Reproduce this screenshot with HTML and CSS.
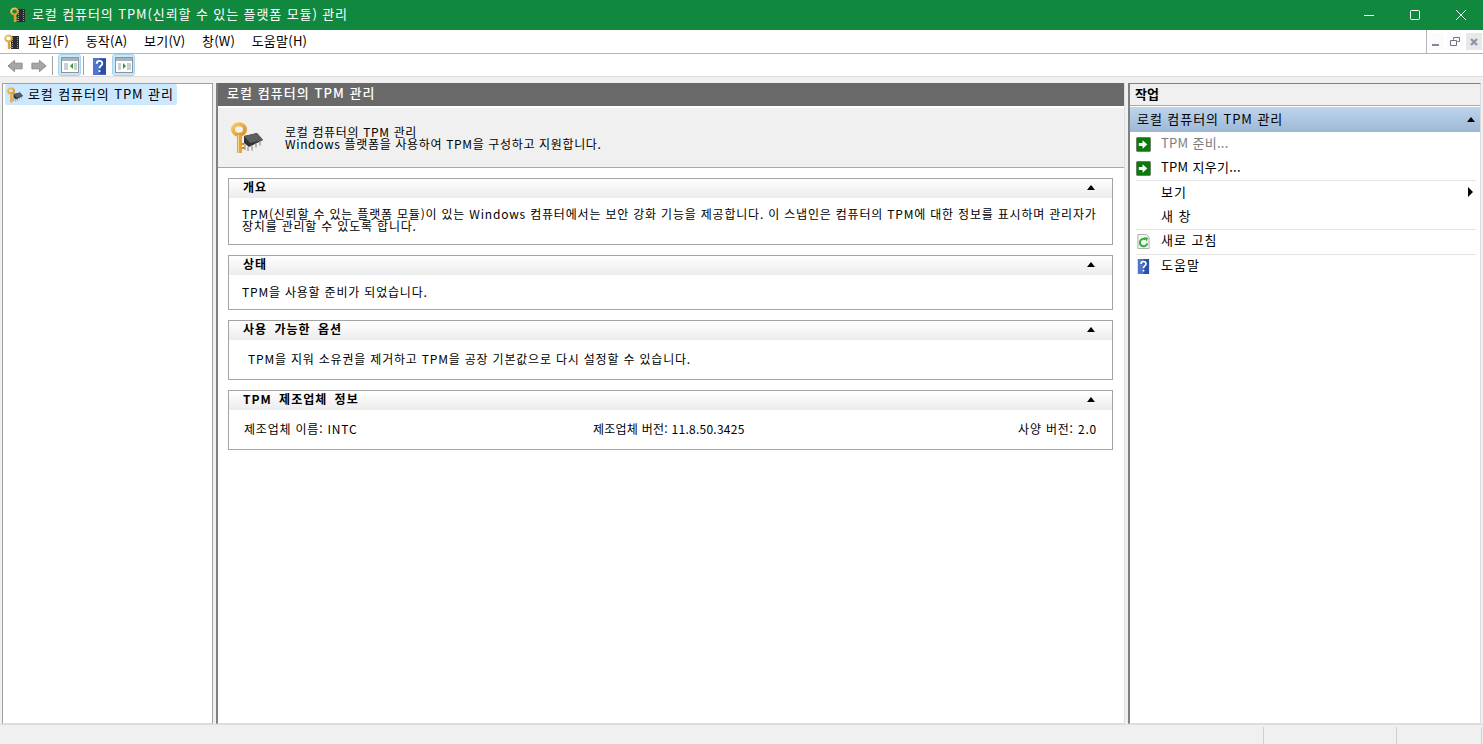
FILE: index.html
```html
<!DOCTYPE html>
<html lang="ko">
<head>
    <meta charset="UTF-8">
    <title>로컬 컴퓨터의 TPM(신뢰할 수 있는 플랫폼 모듈) 관리</title>
    <link rel="stylesheet" href="styles.css">
</head>
<body>
    <svg class="defs" width="0" height="0">
        <defs>
            <linearGradient id="gold" x1="0" y1="0" x2="1" y2="1">
                <stop offset="0" stop-color="#f6c868"/>
                <stop offset="1" stop-color="#d98f24"/>
            </linearGradient>
        </defs>
        <symbol id="key-book" viewBox="0 0 16 16">
            <rect x="7" y="2" width="8" height="13" fill="#2b2b2b"/>
            <path d="M8.500 3v11M13.500 3v11" stroke="#9a9a9a" stroke-dasharray="1 1"/>
            <ellipse cx="4.500" cy="4.500" rx="3.300" ry="3" fill="none" stroke="url(#gold)" stroke-width="2"/>
            <path d="M5 7v8" stroke="#e0a032" stroke-width="2.400"/>
            <path d="M6 11h2M6 13.500h2" stroke="#c98a26"/>
        </symbol>
        <symbol id="key-chip" viewBox="0 0 32 32">
            <path d="M13 14l13-3 6 7-14 7-5-4z" fill="#333"/>
            <path d="M13 14l13-3 6 7-13 3z" fill="#5e5e5e"/>
            <path d="M14 23v5M17 25v4M21 23.500v5M25 21.500v4M29 19.500v4" stroke="#a0a0a0" stroke-width="1.500"/>
            <ellipse cx="8" cy="7.500" rx="6" ry="5.200" fill="none" stroke="url(#gold)" stroke-width="4"/>
            <path d="M8.500 13v18" stroke="#e6a436" stroke-width="5"/>
            <path d="M7.500 13v18" stroke="#f8d68a"/>
            <path d="M11 22h2.500M11 26h2.500" stroke="#c78420" stroke-width="2"/>
        </symbol>
        <symbol id="go" viewBox="0 0 16 16">
            <rect x=".5" y=".5" width="15" height="15" rx="1" fill="#0a7a0a" stroke="#6a7a6a"/>
            <path d="M3 6.500h4V3.500L12 8l-5 4.500V9.500H3z" fill="#fff"/>
        </symbol>
        <symbol id="help" viewBox="0 0 14 18">
            <rect width="14" height="18" fill="#2c4fa8"/>
            <rect width="7" height="18" fill="#5076cc"/>
            <path d="M4 6c0-4 6-4 6 0 0 2-3 2-3 5" fill="none" stroke="#fff" stroke-width="2"/>
            <rect x="6" y="13" width="2" height="2" fill="#fff"/>
        </symbol>
        <symbol id="pane" viewBox="0 0 18 16">
            <rect x=".5" y=".5" width="17" height="15" fill="#fff" stroke="#8a969c"/>
            <rect x="1" y="1" width="16" height="3" fill="#a6b4bc"/>
        </symbol>
    </svg>

    <div class="window">
        <header class="titlebar">
            <svg class="ico16"><use href="#key-book"/></svg>
            <span class="title-text">로컬 컴퓨터의 TPM(신뢰할 수 있는 플랫폼 모듈) 관리</span>
            <div class="caption">
                <span class="cap-btn"><svg width="12" height="12"><path d="M1 6.500h10" stroke="#fff"/></svg></span>
                <span class="cap-btn"><svg width="12" height="12"><rect x="1.500" y="1.500" width="9" height="9" rx="1" fill="none" stroke="#fff"/></svg></span>
                <span class="cap-btn"><svg width="12" height="12"><path d="M1 1l10 10M11 1L1 11" stroke="#fff"/></svg></span>
            </div>
        </header>

        <nav class="menubar">
            <svg class="ico16"><use href="#key-book"/></svg>
            <div class="menu-items">
                <span>파일(F)</span>
                <span>동작(A)</span>
                <span>보기(V)</span>
                <span>창(W)</span>
                <span>도움말(H)</span>
            </div>
            <div class="mdi">
                <span class="mdi-btn"><svg width="10" height="10"><rect x="1" y="7" width="7" height="2" fill="#7c8a9c"/></svg></span>
                <span class="mdi-btn"><svg width="10" height="10"><path d="M3.500 2.500V.5h6v4h-2M.5 3.500h6v5h-6z" fill="none" stroke="#66758a"/></svg></span>
                <span class="mdi-btn mdi-close"><svg width="10" height="10"><path d="M2 2l6 6M8 2L2 8" stroke="#8a98aa" stroke-width="2.400"/></svg></span>
            </div>
        </nav>

        <div class="toolbar">
            <svg class="tool-ico" width="17" height="16" viewBox="0 0 18 16"><path d="M1 8l7-6v3h8v6H8v3z" fill="#a6a6a6" stroke="#8a8a8a"/></svg>
            <svg class="tool-ico" width="17" height="16" viewBox="0 0 18 16"><path d="M17 8l-7-6v3H2v6h8v3z" fill="#a6a6a6" stroke="#8a8a8a"/></svg>
            <span class="tool-sep"></span>
            <span class="tool-btn">
                <svg width="18" height="16"><use href="#pane"/><path d="M3 6h4v7H3z" fill="#c8d0d4"/><path d="M12 6v6L9 9z" fill="#2aa22a"/><path d="M13 6h3v7h-3z" fill="#c8d0d4"/></svg>
            </span>
            <span class="tool-sep tool-sep-help"></span>
            <svg class="tool-help" width="13" height="17"><use href="#help"/></svg>
            <span class="tool-btn">
                <svg width="18" height="16"><use href="#pane"/><path d="M3 6h3v7H3z" fill="#c8d0d4"/><path d="M8 6v6l3-3z" fill="#2aa22a"/><path d="M12 6h4v7h-4z" fill="#c8d0d4"/></svg>
            </span>
        </div>

        <main class="workspace">
            <aside class="tree">
                <div class="tree-item">
                    <svg class="ico16" viewBox="0 0 32 32"><use href="#key-chip"/></svg>
                    <span>로컬 컴퓨터의 TPM 관리</span>
                </div>
            </aside>

            <section class="center">
                <h1 class="center-head">로컬 컴퓨터의 TPM 관리</h1>
                <div class="banner">
                    <svg class="banner-ico"><use href="#key-chip"/></svg>
                    <p>로컬 컴퓨터의 TPM 관리<br>Windows 플랫폼을 사용하여 TPM을 구성하고 지원합니다.</p>
                </div>
                <div class="cards">
                    <article class="card card-about">
                        <h2>개요<i class="arrow-up"></i></h2>
                        <p>TPM(신뢰할 수 있는 플랫폼 모듈)이 있는 Windows 컴퓨터에서는 보안 강화 기능을 제공합니다. 이 스냅인은 컴퓨터의 TPM에 대한 정보를 표시하며 관리자가<br>장치를 관리할 수 있도록 합니다.</p>
                    </article>
                    <article class="card card-status">
                        <h2>상태<i class="arrow-up"></i></h2>
                        <p>TPM을 사용할 준비가 되었습니다.</p>
                    </article>
                    <article class="card card-options">
                        <h2>사용 가능한 옵션<i class="arrow-up"></i></h2>
                        <p>TPM을 지워 소유권을 제거하고 TPM을 공장 기본값으로 다시 설정할 수 있습니다.</p>
                    </article>
                    <article class="card card-vendor">
                        <h2>TPM 제조업체 정보<i class="arrow-up"></i></h2>
                        <div class="vendor-row">
                            <span>제조업체 이름: INTC</span>
                            <span class="vendor-version">제조업체 버전: 11.8.50.3425</span>
                            <span>사양 버전: 2.0</span>
                        </div>
                    </article>
                </div>
            </section>

            <aside class="actions">
                <h2 class="actions-head">작업</h2>
                <div class="actions-sub">로컬 컴퓨터의 TPM 관리<i class="arrow-up"></i></div>
                <ul class="action-list">
                    <li class="disabled latin"><svg class="ico15"><use href="#go"/></svg>TPM 준비...</li>
                    <li class="rule latin"><svg class="ico15"><use href="#go"/></svg>TPM 지우기...</li>
                    <li><span class="ico-gap"></span>보기<i class="arrow-right"></i></li>
                    <li class="rule"><span class="ico-gap"></span>새 창</li>
                    <li class="rule">
                        <svg class="ico15" viewBox="0 0 15 16"><path d="M1.500 .5h9l3 3v12h-12z" fill="#f4f6f4" stroke="#a8aca8"/><path d="M11.500 10a4 4 0 1 1-1.800-4.300" fill="none" stroke="#35b035" stroke-width="2.200"/><path d="M8 3.500l4.500.5-1.500 4z" fill="#35b035"/></svg>
                        새로 고침
                    </li>
                    <li><svg class="ico15" viewBox="0 0 14 18"><use href="#help"/></svg>도움말</li>
                </ul>
            </aside>
        </main>

        <footer class="statusbar">
            <span class="status-cell status-main"></span>
            <span class="status-cell status-mid"></span>
            <span class="status-cell status-end"></span>
        </footer>
    </div>
</body>
</html>
```

FILE: styles.css
```css
* {
    box-sizing: border-box;
}

html, body {
    height: 100%;
    margin: 0;
    overflow: hidden;
}

body {
    font-family: "Noto Sans CJK KR", "Noto Sans", sans-serif;
    font-size: 12px;
    color: #000;
    background-color: #f0f0f0;
}

h1, h2, p, ul {
    margin: 0;
    padding: 0;
    font-size: inherit;
}

.defs {
    display: block;
    height: 0;
}

.window {
    display: flex;
    flex-direction: column;
    height: 100%;
}

.ico16 {
    width: 16px;
    height: 16px;
    flex: none;
}

.ico15 {
    width: 15px;
    height: 15px;
    flex: none;
    margin-top: 4px;
    margin-right: 10px;
}

.ico-gap {
    width: 25px;
    flex: none;
}

/* title bar */
.titlebar {
    display: flex;
    align-items: center;
    height: 30px;
    padding-left: 10px;
    background-color: #10893e;
    color: #fff;
    font-size: 13px;
    letter-spacing: 0.9px;
}

.title-text {
    margin-left: 6px;
    padding-bottom: 4px;
}

.caption {
    display: flex;
    margin-left: auto;
}

.cap-btn {
    display: flex;
    align-items: center;
    justify-content: center;
    width: 46px;
    height: 30px;
    padding-left: 2px;
}

/* menu */
.menubar {
    display: flex;
    align-items: center;
    height: 24px;
    padding-left: 4px;
    background-color: #fff;
    border-bottom: 1px solid #b4b4bc;
}

.menu-items {
    display: flex;
    gap: 16.5px;
    margin-left: 8px;
    padding-bottom: 2px;
    font-size: 13px;
    letter-spacing: 0.25px;
}

.mdi {
    display: flex;
    gap: 3px;
    align-self: stretch;
    align-items: center;
    margin-left: auto;
    width: 57px;
    height: 23px;
    padding-left: 1px;
    border-left: 1px solid #b4b4bc;
}

.mdi-btn {
    display: flex;
    align-items: center;
    justify-content: center;
    width: 16px;
    height: 17px;
    background-color: #fbfbfb;
}

.mdi-close {
    background-color: #e8e8e8;
}

/* toolbar */
.toolbar {
    display: flex;
    align-items: center;
    height: 23px;
    padding-left: 7px;
    background-color: #fff;
    border-bottom: 1px solid #dcdcdc;
}

.tool-ico {
    margin-top: 2px;
    margin-right: 6px;
}

.tool-sep {
    width: 1px;
    height: 19px;
    margin: 0 5px 0 -1px;
    background-color: #a0a0a0;
}

.tool-sep-help {
    margin: 0 9px 0 2px;
}

.tool-btn {
    display: flex;
    align-items: center;
    justify-content: center;
    width: 23px;
    height: 22px;
    background-color: #cde6f7;
    border: 1px solid #a8d4f2;
    border-radius: 3px;
}

.tool-help {
    margin-top: 2px;
    margin-right: 6px;
}

/* panes */
.workspace {
    display: flex;
    flex: 1;
    min-height: 0;
    padding: 6px 2px 0;
    background-color: #f0f0f0;
}

.tree {
    width: 211px;
    padding: 0 0 0 2px;
    margin-right: 3px;
    background-color: #fff;
    border: 1px solid #a0a0a0;
    border-bottom-color: #dcdcdc;
    font-size: 13px;
    letter-spacing: 0.9px;
}

.tree-item {
    display: inline-flex;
    align-items: center;
    gap: 5px;
    height: 21px;
    padding: 0 3px 0 2px;
    background-color: #cce8ff;
    border-radius: 2px;
}

.tree-item span {
    padding-bottom: 3px;
}

.center {
    display: flex;
    flex-direction: column;
    width: 909px;
    background-color: #fff;
    border-left: 2px solid #808080;
    border-right: 1px solid #dcdcdc;
    border-bottom: 1px solid #dcdcdc;
}

.center-head {
    height: 23px;
    padding-left: 9px;
    background-color: #696969;
    color: #fff;
    font-size: 13px;
    font-weight: 500;
    line-height: 20px;
    letter-spacing: 1.05px;
}

.banner {
    display: flex;
    align-items: center;
    height: 62px;
    padding-left: 13px;
    background-color: #f0f0f0;
    border-top: 2px solid #fff;
    border-bottom: 1px solid #a8a8a8;
    line-height: 12px;
    letter-spacing: 0.65px;
}

.banner-ico {
    width: 32px;
    height: 32px;
    margin-right: 22px;
}

.cards {
    display: flex;
    flex-direction: column;
    gap: 10px;
    padding: 10px 11px 0 10px;
}

.card {
    border: 1px solid #a4a4a4;
}

.card h2 {
    position: relative;
    height: 19px;
    padding-left: 14px;
    font-size: 12px;
    font-weight: 700;
    line-height: 16px;
    letter-spacing: 1px;
    word-spacing: 3px;
    background: linear-gradient(#fff, #ececec);
}

.card p {
    padding: 0 13px;
    line-height: 12px;
    letter-spacing: 0.8px;
}

.card-about {
    height: 67px;
}

.card-about p {
    padding-top: 10px;
}

.card-status {
    height: 55px;
}

.card-status p {
    padding-top: 11px;
}

.card-options {
    height: 60px;
}

.card-options p {
    padding-top: 13px;
    padding-left: 19px;
}

.card-vendor {
    height: 60px;
}

.vendor-row {
    display: grid;
    grid-template-columns: 349px 1fr auto;
    padding: 13px 15px 0 15px;
    line-height: 12px;
    letter-spacing: 0.8px;
}

.vendor-version {
    letter-spacing: 0.25px;
}

.arrow-up {
    position: absolute;
    top: 6px;
    right: 17px;
    width: 0;
    height: 0;
    border: 4px solid transparent;
    border-top: 0;
    border-bottom: 5px solid #000;
}

/* actions */
.actions {
    flex: 1;
    margin-left: 3px;
    background-color: #fff;
    border-left: 2px solid #808080;
    border-top: 1px solid #808080;
    border-right: 1px solid #dcdcdc;
    border-bottom: 1px solid #dcdcdc;
}

.actions-head {
    height: 22px;
    padding-left: 5px;
    background-color: #f0f0f0;
    border-bottom: 1px solid #a8a8a8;
    font-size: 13px;
    font-weight: 700;
    line-height: 20px;
}

.actions-sub {
    position: relative;
    height: 25px;
    margin-top: 1px;
    padding-left: 7px;
    background: linear-gradient(#bed4ec, #9db8d6);
    font-size: 13px;
    line-height: 23px;
    letter-spacing: 0.93px;
}

.actions-sub .arrow-up {
    top: 10px;
    right: 5px;
    border-width: 0 4.5px 5px;
    border-bottom-color: #000;
}

.action-list {
    list-style: none;
    padding: 0 4px 0 6px;
    font-size: 13px;
    letter-spacing: 1px;
}

.action-list li {
    position: relative;
    display: flex;
    align-items: center;
    height: 24.5px;
    padding-bottom: 4px;
}

.action-list .latin {
    letter-spacing: 0.3px;
}

.action-list .rule {
    border-bottom: 1px solid #e4e4e4;
}

.action-list .disabled {
    color: #7d7d7d;
}

.arrow-right {
    position: absolute;
    top: 6px;
    right: 3px;
    width: 0;
    height: 0;
    border: 5px solid transparent;
    border-right: 0;
    border-left: 5px solid #000;
}

/* status bar */
.statusbar {
    display: flex;
    height: 20px;
    background-color: #f0f0f0;
    border-top: 1px solid #dcdcdc;
}

.status-cell {
    margin-top: 2px;
    border-right: 1px solid #d0d0d0;
}

.status-main {
    width: 1264px;
}

.status-mid {
    width: 133px;
}

.status-end {
    width: 85px;
}
```
